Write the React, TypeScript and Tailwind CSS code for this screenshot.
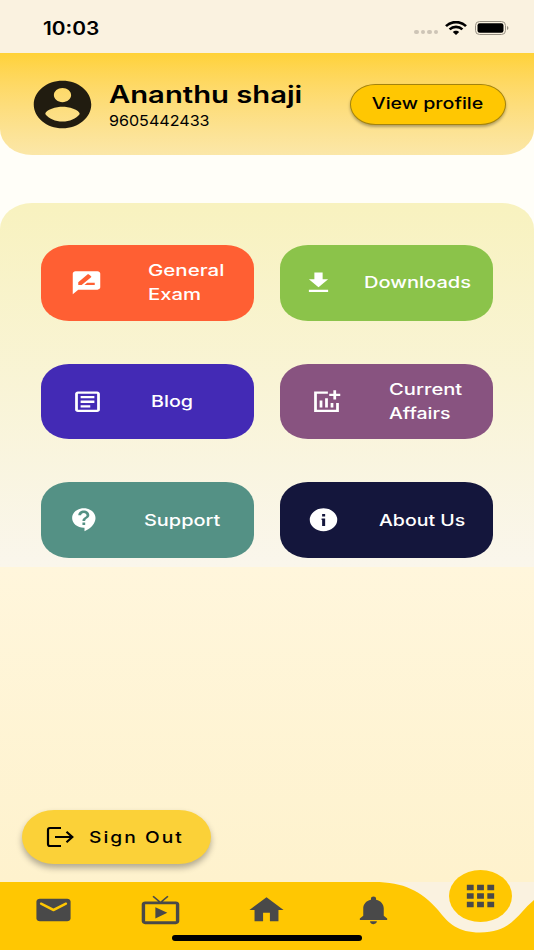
import type { ReactNode } from 'react';
import clsx from 'clsx';
import { MdApps, MdDownload, MdHome, MdNotifications, MdRateReview } from 'react-icons/md';

interface GlyphProps {
  className?: string;
  children: ReactNode;
}

function Glyph({ className, children }: GlyphProps) {
  return (
    <svg
      viewBox="0 0 24 24"
      preserveAspectRatio="none"
      fill="currentColor"
      className={clsx('block shrink-0', className)}
    >
      {children}
    </svg>
  );
}

const tileIcon = 'h-[27.5px] w-[33px] shrink-0';

const tiles = [
  {
    lines: ['General', 'Exam'],
    color: 'bg-[#ff5f33]',
    iconPad: 'pl-[29px]',
    textPad: 'pl-[45px]',
    stretch: ['scale-x-[1.28]', 'scale-x-[1.27]'],
    icon: <MdRateReview preserveAspectRatio="none" className={tileIcon} />,
  },
  {
    lines: ['Downloads'],
    color: 'bg-[#8bc34a]',
    iconPad: 'pl-[21.5px]',
    textPad: 'pl-[29.5px]',
    stretch: ['scale-x-[1.255]'],
    icon: <MdDownload preserveAspectRatio="none" className={tileIcon} />,
  },
  {
    lines: ['Blog'],
    color: 'bg-[#432ab5]',
    iconPad: 'pl-[30px]',
    textPad: 'pl-[47px]',
    stretch: ['scale-x-[1.23]'],
    icon: (
      <Glyph className={tileIcon}>
        <path d="M19 5v14H5V5h14m0-2H5c-1.1 0-2 .9-2 2v14c0 1.1.9 2 2 2h14c1.1 0 2-.9 2-2V5c0-1.1-.9-2-2-2zM14 17H7v-2h7v2zm3-4H7v-2h10v2zm0-4H7V7h10v2z" />
      </Glyph>
    ),
  },
  {
    lines: ['Current', 'Affairs'],
    color: 'bg-[#885380]',
    iconPad: 'pl-[30px]',
    textPad: 'pl-[46px]',
    stretch: ['scale-x-[1.26]', 'scale-x-[1.22]'],
    icon: (
      <Glyph className={tileIcon}>
        <path d="M22 5v2h-3v3h-2V7h-3V5h3V2h2v3h3zm-3 14H5V5h8V3H3v18h18v-8h-2v6zm-4-6v4h2v-4h-2zm-4 4h2V9h-2v8zm-2 0v-6H7v6h2z" />
      </Glyph>
    ),
  },
  {
    lines: ['Support'],
    color: 'bg-[#549185]',
    iconPad: 'pl-[27.5px]',
    textPad: 'pl-[42.5px] pt-px',
    stretch: ['scale-x-[1.245]'],
    icon: (
      <Glyph className={tileIcon}>
        <path d="M11.5 2C6.81 2 3 5.81 3 10.5S6.81 19 11.5 19h.5v3c4.86-2.34 8-7 8-11.5C20 5.81 16.19 2 11.5 2zm1 14.5h-2v-2h2v2zm0-3.5h-2c0-3.25 3-3 3-5 0-1.1-.9-2-2-2s-2 .9-2 2h-2c0-2.21 1.79-4 4-4s4 1.79 4 4c0 2.5-3 2.75-3 5z" />
      </Glyph>
    ),
  },
  {
    lines: ['About Us'],
    color: 'bg-[#14163c]',
    iconPad: 'pl-[26.5px]',
    textPad: 'pl-[39.5px] pt-px',
    stretch: ['scale-x-[1.22]'],
    icon: (
      <Glyph className={tileIcon}>
        <path
          fillRule="evenodd"
          d="M12 2a10 10 0 1 0 0 20a10 10 0 1 0 0-20zM11 7h2.2v2.2H11zM10.6 11h2.6v6.4H11v-5.2h-.4z"
        />
      </Glyph>
    ),
  },
];

function StatusBar() {
  return (
    <header className="flex h-[53px] items-center justify-between bg-[#faf2e0] pr-[25px] pl-[43px] pt-[3px]">
      <span className="origin-left scale-x-[1.16] text-[18px] font-semibold">10:03</span>
      <div className="flex items-center">
        <div className="mt-2 mr-[7px] flex gap-[2px]">
          {[0, 1, 2, 3].map((dot) => (
            <span key={dot} className="h-[3.5px] w-[4.5px] rounded-full bg-[#cdc5b6]" />
          ))}
        </div>
        <svg viewBox="0 0 22 14" className="mr-2 h-[14px] w-[22px]" fill="none" stroke="black">
          <path d="M1 5.1C6.5-.2 15.5-.2 21 5.1" strokeWidth="2.7" />
          <path d="M4.6 8.4C8.2 5 13.8 5 17.4 8.4" strokeWidth="2.6" />
          <path d="M7.8 11C9.4 9.4 12.6 9.4 14.2 11L11 14z" fill="black" stroke="none" />
        </svg>
        <svg viewBox="0 0 34 14" className="h-[14px] w-[34px]">
          <rect x=".5" y=".5" width="30" height="13" rx="4" fill="none" stroke="#968f82" />
          <rect x="2.5" y="2.3" width="26" height="9.4" rx="2.2" />
          <path d="M32 5v4c1.9-.7 1.9-3.3 0-4z" fill="#968f82" />
        </svg>
      </div>
    </header>
  );
}

function ProfileHeader() {
  return (
    <section className="flex h-[102px] items-center rounded-b-[32px_26px] bg-gradient-to-b from-[#ffd237] to-[#fbe7a8] pl-7">
      <Glyph className="h-[57px] w-[69px] text-[#211c10]">
        <path d="M12 2C6.48 2 2 6.48 2 12s4.48 10 10 10 10-4.48 10-10S17.52 2 12 2zm0 3c1.66 0 3 1.34 3 3s-1.34 3-3 3-3-1.34-3-3 1.34-3 3-3zm0 14.2c-2.5 0-4.71-1.28-6-3.22.03-1.99 4-3.08 6-3.08 1.99 0 5.97 1.09 6 3.08-1.29 1.94-3.5 3.22-6 3.22z" />
      </Glyph>
      <div className="flex w-[253px] flex-col items-start pt-[3px] pl-3 whitespace-nowrap">
        <h1 className="origin-left scale-x-[1.217] text-[24px]/[30px] font-semibold">Ananthu shaji</h1>
        <p className="origin-left scale-x-[1.11] text-[14.5px]/[22px]">9605442433</p>
      </div>
      <button className="flex h-[41px] w-[156px] items-center justify-center rounded-[26px/21px] border border-[#a3830d] bg-[#ffc702] pb-0.5 shadow-[0_2px_3px_rgba(0,0,0,0.3)]">
        <span className="scale-x-[1.225] text-[16px] font-medium whitespace-nowrap">View profile</span>
      </button>
    </section>
  );
}

function TileGrid() {
  return (
    <section className="mt-12 grid h-[364px] grid-cols-[213px_213px] content-start gap-x-[26.5px] gap-y-[43px] rounded-t-[32px_26px] bg-gradient-to-b from-[#f8f2bf] to-[#faf6ec] pt-[42px] pl-[40.5px]">
      {tiles.map((tile) => (
        <button
          key={tile.lines[0]}
          className={clsx(
            'flex h-[75.7px] items-center rounded-[28px/23px] text-left text-white',
            tile.color,
            tile.iconPad,
          )}
        >
          {tile.icon}
          <span className={clsx('flex flex-col items-start', tile.textPad)}>
            {tile.lines.map((line, i) => (
              <span
                key={line}
                className={clsx(
                  'origin-left text-[16px]/[23.5px] font-medium whitespace-nowrap',
                  tile.stretch[i],
                )}
              >
                {line}
              </span>
            ))}
          </span>
        </button>
      ))}
    </section>
  );
}

function SignOut() {
  return (
    <button className="flex h-[54px] w-[189px] items-center rounded-[32px/27px] bg-[#fbd138] pl-6 shadow-[0_4px_6px_rgba(0,0,0,0.3)]">
      <svg viewBox="0 0 28 22" className="h-[22px] w-7 shrink-0" fill="none" stroke="black" strokeWidth="2.2">
        <path d="M15 2H4Q2 2 2 4v14q0 2 2 2h11" />
        <path d="M9 11h17M20.5 5.8 26.3 11l-5.8 5.2" />
      </svg>
      <span className="ml-[14.5px] origin-left scale-x-[1.2] text-[16px] font-medium tracking-[1.7px] whitespace-nowrap">
        Sign Out
      </span>
    </button>
  );
}

function BottomNav() {
  return (
    <nav className="relative grid h-[68px] grid-cols-5 bg-[#faf2e0] text-[#494949]">
      <svg viewBox="0 0 534 68" className="absolute inset-0 h-full w-full">
        <path
          d="M0 0H374C404 0 421 9 438 28C449 42 458 50.5 480 50.5C502 50.5 511 42 522 30Q528 23 534 18V68H0z"
          fill="#ffc702"
        />
      </svg>
      <div className="relative flex justify-center pt-[11px]">
        <Glyph className="h-[34px] w-[41px]">
          <path d="M20 4H4c-1.1 0-2 .9-2 2v12c0 1.1.9 2 2 2h16c1.1 0 2-.9 2-2V6c0-1.1-.9-2-2-2zm-.4 4.25l-7.07 4.42c-.32.2-.74.2-1.06 0L4.4 8.25c-.25-.16-.4-.43-.4-.72 0-.67.73-1.07 1.3-.72L12 11l6.7-4.19c.57-.35 1.3.05 1.3.72 0 .29-.15.56-.4.72z" />
        </Glyph>
      </div>
      <div className="relative flex justify-center pt-[11px]">
        <Glyph className="h-[34px] w-[41px]">
          <path d="M21 6h-7.59l3.29-3.29L16 2l-4 4-4-4-.71.71L10.59 6H3c-1.1 0-2 .89-2 2v12c0 1.1.9 2 2 2h18c1.1 0 2-.9 2-2V8c0-1.11-.9-2-2-2zm0 14H3V8h18v12zM9 10v8l7-4z" />
        </Glyph>
      </div>
      <div className="relative flex justify-center pt-[11px]">
        <MdHome preserveAspectRatio="none" className="h-[34px] w-[41px]" />
      </div>
      <div className="relative flex justify-center pt-[11px]">
        <MdNotifications preserveAspectRatio="none" className="h-[34px] w-[41px]" />
      </div>
      <div className="relative flex justify-center">
        <span className="-mt-3 flex h-[52px] w-[63px] items-center justify-center rounded-[50%] bg-[#ffc702]">
          <MdApps preserveAspectRatio="none" className="h-[34px] w-[41px]" />
        </span>
      </div>
      <div className="absolute bottom-[9.5px] left-[172px] h-[5.5px] w-[190px] rounded-full bg-black" />
    </nav>
  );
}

export default function App() {
  return (
    <div className="flex h-[950px] w-[534px] flex-col overflow-hidden bg-[#fffef8] font-['Inter',sans-serif] text-black">
      <StatusBar />
      <ProfileHeader />
      <TileGrid />
      <main className="flex flex-1 flex-col justify-end bg-gradient-to-b from-[#fff6dc] to-[#fef2cd] pb-[18px] pl-[22px]">
        <SignOut />
      </main>
      <BottomNav />
    </div>
  );
}
